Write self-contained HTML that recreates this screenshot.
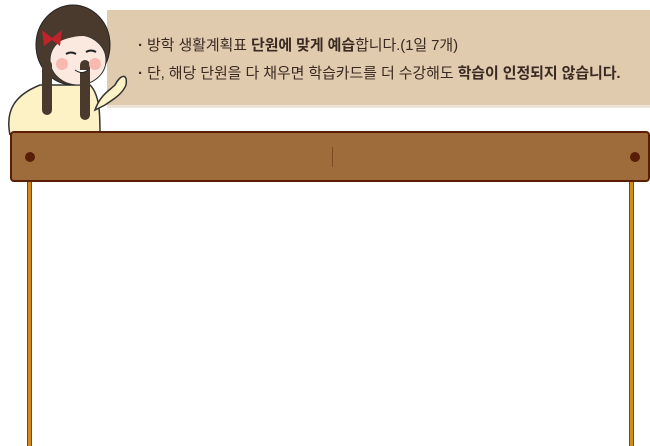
<!DOCTYPE html>
<html><head><meta charset="utf-8"><style>
body{margin:0;width:650px;height:446px;background:#fff;position:relative;overflow:hidden;font-family:"Liberation Sans","Noto Sans CJK KR",sans-serif}
.box{position:absolute;left:107px;top:10px;width:543px;height:95px;background:#e0cbae;border-bottom:3px solid #ece2d6}
.t{position:absolute;left:138px;font-size:15px;color:#3a2a22;letter-spacing:-0.1px;white-space:nowrap}
.t b{font-weight:bold}
.board{position:absolute;left:10px;top:131px;width:636px;height:47px;background:#9e6b3a;border:2px solid #5a1e05;border-radius:4px}
.dot{position:absolute;top:19px;width:10px;height:10px;border-radius:50%;background:#5a1e05}
.rope{position:absolute;top:181px;width:3px;height:265px;background:#d48a1a;border-left:1px solid #7a4a10;border-right:1px solid #7a4a10}
</style></head><body>
<div class="box"></div>
<div class="t" style="top:34px"><b>·</b> 방학 생활계획표 <b>단원에 맞게 예습</b>합니다.(1일 7개)</div>
<div class="t" style="top:62px"><b>·</b> 단, 해당 단원을 다 채우면 학습카드를 더 수강해도 <b>학습이 인정되지 않습니다.</b></div>
<div class="rope" style="left:27px"></div>
<div class="rope" style="left:629px"></div>
<svg style="position:absolute;left:0;top:0" width="130" height="135">
<path d="M10 135 C5 110 15 95 40 85 L90 85 C100 95 100 115 100 135 Z" fill="#fcf2c6" stroke="#333" stroke-width="1.5"/>
<path d="M95 110 C100 95 110 90 115 85 C120 75 128 72 126 85 C122 95 112 100 105 105 Z" fill="#fcf2c6" stroke="#333" stroke-width="1.5"/>
<ellipse cx="73" cy="45" rx="37" ry="40" fill="#4a3a2e" stroke="#222"/>
<ellipse cx="78" cy="60" rx="28" ry="25" fill="#fbe8df" stroke="#333"/>
<path d="M52 30 C65 22 95 22 110 50 C100 35 80 30 52 45 Z" fill="#4a3a2e"/>
<rect x="42" y="60" width="10" height="55" rx="5" fill="#4a3a2e"/>
<rect x="80" y="60" width="10" height="60" rx="5" fill="#4a3a2e"/>
<circle cx="62" cy="64" r="6" fill="#f7b9b0"/><circle cx="95" cy="64" r="6" fill="#f7b9b0"/>
<path d="M66 54 q5 -3 10 0 M86 52 q5 -3 10 0" stroke="#222" stroke-width="2" fill="none"/>
<path d="M75 70 q7 5 13 0" stroke="#222" fill="#fff"/>
<path d="M42 30 l10 8 l10 -8 l-2 16 l-8 -6 l-8 6z" fill="#c0242a"/>
</svg>
<div class="board"><div class="dot" style="left:13px"></div><div class="dot" style="right:8px"></div>
<div style="position:absolute;left:320px;top:14px;width:1px;height:20px;background:#7a4a20"></div></div>
</body></html>
